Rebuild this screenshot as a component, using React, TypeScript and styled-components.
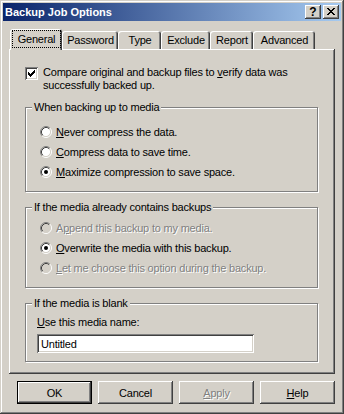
import React from 'react';
import styled, { createGlobalStyle, css } from 'styled-components';

const face = '#D4D0C8';
const shadow = '#808080';
const dark = '#404040';

const GlobalStyle = createGlobalStyle`
  html, body {
    margin: 0;
    padding: 0;
    background: ${face};
  }
  body {
    font-family: "Liberation Sans", Arial, sans-serif;
    font-size: 11px;
    letter-spacing: -0.2px;
    color: #000;
  }
`;

const raised = css`
  box-shadow: inset -1px -1px ${dark}, inset 1px 1px #fff, inset -2px -2px ${shadow};
`;

const sunken = css`
  box-shadow: inset 1px 1px ${shadow}, inset -1px -1px #fff, inset 2px 2px ${dark},
    inset -2px -2px ${face};
`;

const Window = styled.div`
  width: 344px;
  height: 414px;
  box-sizing: border-box;
  padding: 3px;
  background: ${face};
  box-shadow: inset -1px -1px ${dark}, inset 1px 1px ${face}, inset -2px -2px ${shadow},
    inset 2px 2px #fff;
  display: flex;
  flex-direction: column;
`;

const TitleBar = styled.div`
  height: 18px;
  flex: none;
  display: flex;
  align-items: center;
  padding: 0 2px 0 2px;
  background: linear-gradient(to right, #0a246a, #a6caf0);
  color: #fff;
  font-weight: bold;
  letter-spacing: 0;
`;

const Title = styled.div`
  flex: 1;
  white-space: nowrap;
`;

const CaptionButton = styled.div<{ $gap?: number }>`
  width: 16px;
  height: 14px;
  margin-left: ${(p) => p.$gap ?? 0}px;
  background: ${face};
  ${raised};
  display: flex;
  align-items: center;
  justify-content: center;
  color: #000;
  font-size: 12px;
  font-weight: bold;
  line-height: 14px;
`;

const Body = styled.div`
  flex: 1;
  display: flex;
  flex-direction: column;
  padding: 8px 6px 0 6px;
`;

const TabStrip = styled.div`
  height: 20px;
  display: flex;
  align-items: flex-end;
  padding-left: 1px;
  position: relative;
  z-index: 1;
`;

const Tab = styled.div<{ $w: number; $active?: boolean }>`
  width: ${(p) => p.$w}px;
  height: ${(p) => (p.$active ? 21 : 18)}px;
  margin-bottom: ${(p) => (p.$active ? -1 : 0)}px;
  box-sizing: border-box;
  padding: 1px 1px 2px 2px;
  display: flex;
  background: ${face};
  border-radius: 3px 3px 0 0;
  box-shadow: inset 1px 1px #fff, inset -1px 0 ${dark}, inset -2px 0 ${shadow};
`;

const TabLabel = styled.span<{ $focus?: boolean }>`
  flex: 1;
  display: flex;
  align-items: center;
  justify-content: center;
  border: 1px dotted ${(p) => (p.$focus ? '#000' : 'transparent')};
  white-space: nowrap;
`;

const Panel = styled.div`
  height: 325px;
  box-sizing: border-box;
  padding: 17px 17px 0 16px;
  ${raised};
  display: flex;
  flex-direction: column;
`;

const CheckRow = styled.div`
  display: flex;
  align-items: flex-start;
  gap: 5px;
  line-height: 13px;
`;

const CheckBox = styled.span`
  width: 13px;
  height: 13px;
  flex: none;
  margin-top: 1px;
  background: #fff;
  ${sunken};
  display: block;
`;

const Group = styled.fieldset<{ $pt: number; $pb: number; $pl: number }>`
  margin: 9px 0 0 0;
  padding: ${(p) => `${p.$pt}px 0 ${p.$pb}px ${p.$pl}px`};
  min-width: 0;
  border: 1px solid ${shadow};
  box-shadow: inset 1px 1px #fff, 1px 1px 0 #fff;

  & > legend {
    margin-left: ${(p) => 6 - p.$pl}px;
  }
`;

const Legend = styled.legend`
  padding: 0 2px;
  line-height: 13px;
  background: ${face};
`;

const RadioRow = styled.div<{ $disabled?: boolean }>`
  height: 20px;
  display: flex;
  align-items: center;
  gap: 4px;
  ${(p) =>
    p.$disabled &&
    css`
      color: ${shadow};
      text-shadow: 1px 1px 0 #fff;
    `}
`;

const FieldLabel = styled.div`
  line-height: 13px;
`;

const TextBox = styled.div`
  width: 217px;
  height: 19px;
  margin-top: 5px;
  box-sizing: border-box;
  padding: 0 4px;
  background: #fff;
  ${sunken};
  display: flex;
  align-items: center;
`;

const ButtonRow = styled.div`
  display: flex;
  justify-content: flex-end;
  gap: 6px;
  margin-top: 7px;
`;

const Button = styled.div<{ $default?: boolean; $disabled?: boolean }>`
  width: 75px;
  height: 23px;
  box-sizing: border-box;
  background: ${face};
  ${raised};
  display: flex;
  align-items: center;
  justify-content: center;
  ${(p) =>
    p.$default &&
    css`
      border: 1px solid #000;
    `}
  ${(p) =>
    p.$disabled &&
    css`
      color: ${shadow};
      text-shadow: 1px 1px 0 #fff;
    `}
`;

const rects = (cells: [number, number, number][]) =>
  cells.map(([x, y, w]) => `M${x} ${y}h${w}v1h-${w}z`).join('');

const checkPath = rects([
  [9, 3, 1],
  [8, 4, 2],
  [3, 5, 1],
  [7, 5, 3],
  [3, 6, 2],
  [6, 6, 3],
  [3, 7, 5],
  [4, 8, 3],
  [5, 9, 1],
]);

const closePath = rects([
  [4, 3, 2],
  [10, 3, 2],
  [5, 4, 2],
  [9, 4, 2],
  [6, 5, 4],
  [7, 6, 2],
  [6, 7, 4],
  [5, 8, 2],
  [9, 8, 2],
  [4, 9, 2],
  [10, 9, 2],
]);

const Radio = ({ checked, disabled }: { checked?: boolean; disabled?: boolean }) => (
  <svg width="12" height="12" viewBox="0 0 12 12" style={{ flex: 'none' }}>
    <circle cx="6" cy="6" r="4.5" fill={disabled ? face : '#fff'} />
    <path d="M2.11 9.89A5.5 5.5 0 0 1 9.89 2.11" fill="none" stroke={shadow} />
    <path d="M9.89 2.11A5.5 5.5 0 0 1 2.11 9.89" fill="none" stroke="#fff" />
    <path d="M2.82 9.18A4.5 4.5 0 0 1 9.18 2.82" fill="none" stroke={dark} />
    <path d="M9.18 2.82A4.5 4.5 0 0 1 2.82 9.18" fill="none" stroke={face} />
    {checked && <circle cx="6" cy="6" r="2" fill={disabled ? shadow : '#000'} />}
  </svg>
);

const tabs = [
  { label: 'General', w: 52 },
  { label: 'Password', w: 56 },
  { label: 'Type', w: 43 },
  { label: 'Exclude', w: 49 },
  { label: 'Report', w: 43 },
  { label: 'Advanced', w: 62 },
];

export default function App() {
  return (
    <>
      <GlobalStyle />
      <Window>
        <TitleBar>
          <Title>Backup Job Options</Title>
          <CaptionButton>?</CaptionButton>
          <CaptionButton $gap={2}>
            <svg width="16" height="14" viewBox="0 0 16 14" shapeRendering="crispEdges">
              <path d={closePath} fill="#000" />
            </svg>
          </CaptionButton>
        </TitleBar>
        <Body>
          <TabStrip>
            {tabs.map((t, i) => (
              <Tab key={t.label} $w={t.w} $active={i === 0}>
                <TabLabel $focus={i === 0}>{t.label}</TabLabel>
              </Tab>
            ))}
          </TabStrip>
          <Panel>
            <CheckRow>
              <CheckBox>
                <svg width="13" height="13" viewBox="0 0 13 13" shapeRendering="crispEdges">
                  <path d={checkPath} fill="#000" />
                </svg>
              </CheckBox>
              <span>
                Compare original and backup files to <u>v</u>erify data was successfully backed
                up.
              </span>
            </CheckRow>

            <Group $pt={8} $pb={9} $pl={14}>
              <Legend>When backing up to media</Legend>
              <RadioRow>
                <Radio />
                <span>
                  <u>N</u>ever compress the data.
                </span>
              </RadioRow>
              <RadioRow>
                <Radio />
                <span>
                  <u>C</u>ompress data to save time.
                </span>
              </RadioRow>
              <RadioRow>
                <Radio checked />
                <span>
                  <u>M</u>aximize compression to save space.
                </span>
              </RadioRow>
            </Group>

            <Group $pt={4} $pb={9} $pl={14}>
              <Legend>If the media already contains backups</Legend>
              <RadioRow $disabled>
                <Radio disabled />
                <span>
                  A<u>p</u>pend this backup to my media.
                </span>
              </RadioRow>
              <RadioRow>
                <Radio checked />
                <span>
                  <u>O</u>verwrite the media with this backup.
                </span>
              </RadioRow>
              <RadioRow $disabled>
                <Radio disabled />
                <span>
                  <u>L</u>et me choose this option during the backup.
                </span>
              </RadioRow>
            </Group>

            <Group $pt={6} $pb={8} $pl={11}>
              <Legend>If the media is blank</Legend>
              <FieldLabel>
                <u>U</u>se this media name:
              </FieldLabel>
              <TextBox>Untitled</TextBox>
            </Group>
          </Panel>
          <ButtonRow>
            <Button $default>OK</Button>
            <Button>Cancel</Button>
            <Button $disabled>
              <span>
                <u>A</u>pply
              </span>
            </Button>
            <Button>
              <span>
                <u>H</u>elp
              </span>
            </Button>
          </ButtonRow>
        </Body>
      </Window>
    </>
  );
}
